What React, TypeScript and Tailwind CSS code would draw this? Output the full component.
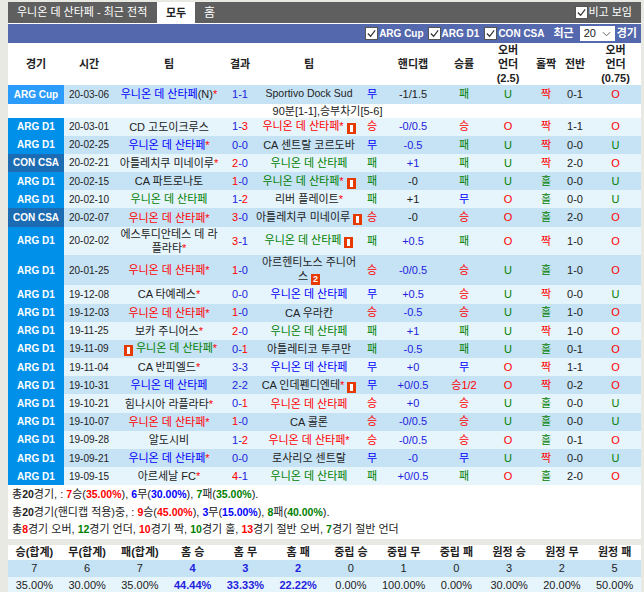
type Row = {
  league: string;
  date: string;
  home: React.ReactNode;
  score: string;
  away: React.ReactNode;
  res: string;
  hc: string;
  hcBlue?: boolean;
  rate: string;
  ou: string;
  oe: string;
  half: string;
  ou2: string;
  tall?: boolean;
};

const red = "text-[#ff0000]";
const blue = "text-[#0000ff]";
const green = "text-[#008000]";

const RES: Record<string, string> = {
  승: red,
  무: blue,
  패: green,
  "승1/2": red,
};

const Star = () => <span className="text-[#ff0000]">*</span>;

// 퇴장 카드 아이콘
const Card = ({ n }: { n?: string }) => (
  <span className="ml-[3px] inline-flex h-[11px] w-[9px] items-center justify-center bg-[#e63a00] align-[-2px] text-[9px] leading-none font-bold text-white">
    {n ?? <span className="h-[7px] w-[3px] bg-white" />}
  </span>
);

const Team = ({ c, star, card }: { c: string; star?: boolean; card?: boolean }) => (
  <>
    <span className={c}>우니온 데 산타페</span>
    {star && <Star />}
    {card && <Card />}
  </>
);

const rows: Row[] = [
  { league: "ARG D1", date: "20-03-01", home: "CD 고도이크루스", score: "1-3", away: <Team c={red} star card />, res: "승", hc: "-0/0.5", hcBlue: true, rate: "승", ou: "O", oe: "짝", half: "1-1", ou2: "O" },
  { league: "ARG D1", date: "20-02-25", home: <Team c={blue} star />, score: "0-0", away: "CA 센트랄 코르도바", res: "무", hc: "-0.5", hcBlue: true, rate: "패", ou: "U", oe: "짝", half: "0-0", ou2: "U" },
  { league: "CON CSA", date: "20-02-21", home: <>아틀레치쿠 미네이루<Star /></>, score: "2-0", away: <Team c={green} />, res: "패", hc: "+1", hcBlue: true, rate: "패", ou: "U", oe: "짝", half: "2-0", ou2: "O" },
  { league: "ARG D1", date: "20-02-15", home: "CA 파트로나토", score: "1-0", away: <Team c={green} star card />, res: "패", hc: "-0", rate: "패", ou: "U", oe: "홀", half: "0-0", ou2: "U" },
  { league: "ARG D1", date: "20-02-10", home: <Team c={green} />, score: "1-2", away: <>리버 플레이트<Star /></>, res: "패", hc: "+1", rate: "무", ou: "O", oe: "홀", half: "0-0", ou2: "U" },
  { league: "CON CSA", date: "20-02-07", home: <Team c={red} star />, score: "3-0", away: <span className="whitespace-nowrap">아틀레치쿠 미네이루<Card /></span>, res: "승", hc: "-0", rate: "승", ou: "O", oe: "홀", half: "2-0", ou2: "O" },
  { league: "ARG D1", date: "20-02-02", home: <>에스투디안테스 데 라 플라타<Star /></>, score: "3-1", away: <Team c={green} card />, res: "패", hc: "+0.5", hcBlue: true, rate: "패", ou: "O", oe: "짝", half: "1-0", ou2: "O", tall: true },
  { league: "ARG D1", date: "20-01-25", home: <Team c={red} star />, score: "1-0", away: <>아르헨티노스 주니어<br />스<Card n="2" /></>, res: "승", hc: "-0/0.5", hcBlue: true, rate: "승", ou: "U", oe: "홀", half: "1-0", ou2: "O", tall: true },
  { league: "ARG D1", date: "19-12-08", home: <>CA 타예레스<Star /></>, score: "0-0", away: <Team c={blue} />, res: "무", hc: "+0.5", hcBlue: true, rate: "승", ou: "U", oe: "짝", half: "0-0", ou2: "U" },
  { league: "ARG D1", date: "19-12-03", home: <Team c={red} star />, score: "1-0", away: "CA 우라칸", res: "승", hc: "-0.5", hcBlue: true, rate: "승", ou: "U", oe: "홀", half: "1-0", ou2: "O" },
  { league: "ARG D1", date: "19-11-25", home: <>보카 주니어스<Star /></>, score: "2-0", away: <Team c={green} />, res: "패", hc: "+1", hcBlue: true, rate: "패", ou: "U", oe: "짝", half: "1-0", ou2: "O" },
  { league: "ARG D1", date: "19-11-09", home: <><Card /> <Team c={green} star /></>, score: "0-1", away: "아틀레티코 투쿠만", res: "패", hc: "-0.5", hcBlue: true, rate: "패", ou: "U", oe: "홀", half: "0-1", ou2: "O" },
  { league: "ARG D1", date: "19-11-04", home: <>CA 반피엘드<Star /></>, score: "3-3", away: <Team c={blue} />, res: "무", hc: "+0", hcBlue: true, rate: "무", ou: "O", oe: "짝", half: "1-1", ou2: "O" },
  { league: "ARG D1", date: "19-10-31", home: <Team c={blue} />, score: "2-2", away: <span className="whitespace-nowrap">CA 인데펜디엔테<Star /><Card /></span>, res: "무", hc: "+0/0.5", hcBlue: true, rate: "승1/2", ou: "O", oe: "짝", half: "0-2", ou2: "O" },
  { league: "ARG D1", date: "19-10-21", home: <>힘나시아 라플라타<Star /></>, score: "0-1", away: <Team c={red} />, res: "승", hc: "+0", hcBlue: true, rate: "승", ou: "U", oe: "홀", half: "0-0", ou2: "U" },
  { league: "ARG D1", date: "19-10-07", home: <Team c={red} star />, score: "1-0", away: "CA 콜론", res: "승", hc: "-0/0.5", hcBlue: true, rate: "승", ou: "U", oe: "홀", half: "0-0", ou2: "U" },
  { league: "ARG D1", date: "19-09-28", home: "알도시비", score: "1-2", away: <Team c={red} star />, res: "승", hc: "-0/0.5", hcBlue: true, rate: "승", ou: "O", oe: "홀", half: "0-1", ou2: "O" },
  { league: "ARG D1", date: "19-09-21", home: <Team c={blue} star />, score: "0-0", away: "로사리오 센트랄", res: "무", hc: "-0", hcBlue: true, rate: "무", ou: "U", oe: "짝", half: "0-0", ou2: "U" },
  { league: "ARG D1", date: "19-09-15", home: <>아르세날 FC<Star /></>, score: "4-1", away: <Team c={green} />, res: "패", hc: "+0/0.5", hcBlue: true, rate: "패", ou: "O", oe: "홀", half: "2-0", ou2: "O" },
];

const statHead = ["승(합계)", "무(합계)", "패(합계)", "홈 승", "홈 무", "홈 패", "중립 승", "중립 무", "중립 패", "원정 승", "원정 무", "원정 패"];
const statCount = ["7", "6", "7", "4", "3", "2", "0", "1", "0", "3", "2", "5"];
const statPct = ["35.00%", "30.00%", "35.00%", "44.44%", "33.33%", "22.22%", "0.00%", "100.00%", "0.00%", "30.00%", "20.00%", "50.00%"];

const Check = () => (
  <span className="inline-flex h-[13px] w-[13px] shrink-0 items-center justify-center border border-[#555] bg-white">
    <svg viewBox="0 0 12 12" className="h-[11px] w-[11px]" fill="none" stroke="#333" strokeWidth="1.3">
      <path d="M2 6l3 3 5-6.5" />
    </svg>
  </span>
);

const Score = ({ s }: { s: string }) => {
  const [a, b] = s.split("-");
  const ca = Number(a) > Number(b) ? red : "text-[#2222dd]";
  const cb = Number(b) > Number(a) ? red : "text-[#2222dd]";
  return (
    <>
      <span className={ca}>{a}</span>
      <span className="text-[#2222dd]">-</span>
      <span className={cb}>{b}</span>
    </>
  );
};

const ouColor = (v: string) => (v === "U" ? green : red);

const Match = ({ r, i }: { r: Row; i: number }) => {
  const bg = i % 2 === 0 ? "bg-[#e6f4fc]" : "bg-[#c6e2f5]";
  const lg = r.league === "CON CSA" ? "bg-[#1b6cb3]" : "bg-[#0090ea]";
  return (
    <tr className={`${bg} ${r.tall ? "h-[28.7px]" : "h-[18.2px]"}`}>
      <td className={`${lg} text-[10px] font-bold text-white`}>{r.league}</td>
      <td className="text-[10px]">{r.date}</td>
      <td className="leading-[14px]">{r.home}</td>
      <td><Score s={r.score} /></td>
      <td className="leading-[14px]">{r.away}</td>
      <td className={RES[r.res]}>{r.res}</td>
      <td className={r.hcBlue ? "text-[#2222dd]" : ""}>{r.hc}</td>
      <td className={RES[r.rate]}>{r.rate}</td>
      <td className={ouColor(r.ou)}>{r.ou}</td>
      <td className={r.oe === "짝" ? red : green}>{r.oe}</td>
      <td>{r.half}</td>
      <td className={ouColor(r.ou2)}>{r.ou2}</td>
    </tr>
  );
};

export default function App() {
  return (
    <div className="h-[592px] w-[644px] overflow-hidden bg-[#e9e9e4] pt-[2px] pl-[8px] font-['Liberation_Sans','Noto_Sans_CJK_KR',sans-serif] text-[11px] text-[#222]">
      <div className="w-[633px] bg-white">
        {/* 상단 탭 */}
        <div className="flex h-[21px] items-center bg-[#5f5f5f] text-white">
          <span className="ml-[9px] w-[140px] whitespace-nowrap">우니온 데 산타페 - 최근 전적</span>
          <span className="flex h-[21px] w-[38px] items-center justify-center bg-white pt-[2px] font-bold text-[#222]">모두</span>
          <span className="ml-[9px] text-[12px]">홈</span>
          <label className="mr-[9px] ml-auto flex items-center"><Check />비고 보임</label>
        </div>
        {/* 필터 */}
        <div className="mt-px flex h-[19px] items-center justify-end bg-[#5468ae] text-[10px] font-bold whitespace-nowrap text-white">
          <Check /><span className="mr-[4px] ml-px">ARG Cup</span>
          <Check /><span className="mr-[5px] ml-px">ARG D1</span>
          <Check /><span className="mr-[9px] ml-px">CON CSA</span>
          <span className="mr-[6px] text-[11px]">최근</span>
          <span className="mr-[2px] flex h-[15px] w-[35px] items-center justify-between bg-white px-1 text-[11px] font-normal text-[#222]">
            20
            <svg viewBox="0 0 10 6" className="h-[6px] w-[9px]" fill="none" stroke="#555"><path d="M1 1l4 4 4-4" /></svg>
          </span>
          <span className="mr-[4px] text-[11px]">경기</span>
        </div>

        <table className="w-[633px] table-fixed border-collapse text-center">
          <colgroup>
            <col className="w-[56px]" />
            <col className="w-[50px]" />
            <col className="w-[110px]" />
            <col className="w-[32px]" />
            <col className="w-[106px]" />
            <col className="w-[20px]" />
            <col className="w-[62px]" />
            <col className="w-[40px]" />
            <col className="w-[48px]" />
            <col className="w-[28px]" />
            <col className="w-[30px]" />
            <col className="w-[51px]" />
          </colgroup>
          <thead>
            <tr className="h-[42px] leading-[14px] font-bold">
              <th>경기</th>
              <th>시간</th>
              <th>팀</th>
              <th>결과</th>
              <th>팀</th>
              <th></th>
              <th>핸디캡</th>
              <th>승률</th>
              <th>오버<br />언더<br />(2.5)</th>
              <th>홀짝</th>
              <th>전반</th>
              <th>오버<br />언더<br />(0.75)</th>
            </tr>
          </thead>
          <tbody>
            <tr className="h-[18.5px] bg-[#c6e2f5]">
              <td className="bg-[#2b9cfb] text-[10px] font-bold text-white">ARG Cup</td>
              <td className="text-[10px]">20-03-06</td>
              <td><span className={blue}>우니온 데 산타페</span>(N)<Star /></td>
              <td><Score s="1-1" /></td>
              <td className="text-[10.5px]">Sportivo Dock Sud</td>
              <td className={blue}>무</td>
              <td>-1/1.5</td>
              <td className={green}>패</td>
              <td className={green}>U</td>
              <td className={red}>짝</td>
              <td>0-1</td>
              <td className={red}>O</td>
            </tr>
            <tr className="h-[14px] bg-white leading-[14px]">
              <td colSpan={12} className="pl-[6px]">90분[1-1],승부차기[5-6]</td>
            </tr>
            {rows.map((r, i) => (
              <Match key={r.date} r={r} i={i} />
            ))}
          </tbody>
        </table>

        {/* 요약 */}
        <div className="h-[54px] pt-px pl-[4px] leading-[17.5px] whitespace-nowrap [&_b]:text-[10.5px]">
          <div>총<b>20</b>경기, : <b className={red}>7</b>승(<b className={red}>35.00%</b>), <b className={blue}>6</b>무(<b className={blue}>30.00%</b>), <b className={green}>7</b>패(<b className={green}>35.00%</b>).</div>
          <div>총<b>20</b>경기(핸디캡 적용)중, : <b className={red}>9</b>승(<b className={red}>45.00%</b>), <b className={blue}>3</b>무(<b className={blue}>15.00%</b>), <b className={green}>8</b>패(<b className={green}>40.00%</b>).</div>
          <div>총<b className={red}>8</b>경기 오버, <b className={green}>12</b>경기 언더, <b className={red}>10</b>경기 짝, <b className={green}>10</b>경기 홀, <b className={red}>13</b>경기 절반 오버, <b className={green}>7</b>경기 절반 언더</div>
        </div>
      </div>

      {/* 통계 */}
      <table className="mt-[6px] w-[633px] table-fixed border-collapse bg-white text-center leading-[13px]">
        <tbody>
          <tr className="h-[15px] font-bold">
            {statHead.map((h) => <td key={h}>{h}</td>)}
          </tr>
          <tr className="h-[17px] bg-[#c6e2f5]">
            {statCount.map((c, i) => (
              <td key={i} className={i >= 3 && i <= 5 ? "font-bold text-[#2222dd]" : ""}>{c}</td>
            ))}
          </tr>
          <tr className="h-[17px] bg-[#e6f4fc]">
            {statPct.map((c, i) => (
              <td key={i} className={i >= 3 && i <= 5 ? "font-bold text-[#2222dd]" : ""}>{c}</td>
            ))}
          </tr>
        </tbody>
      </table>
    </div>
  );
}
